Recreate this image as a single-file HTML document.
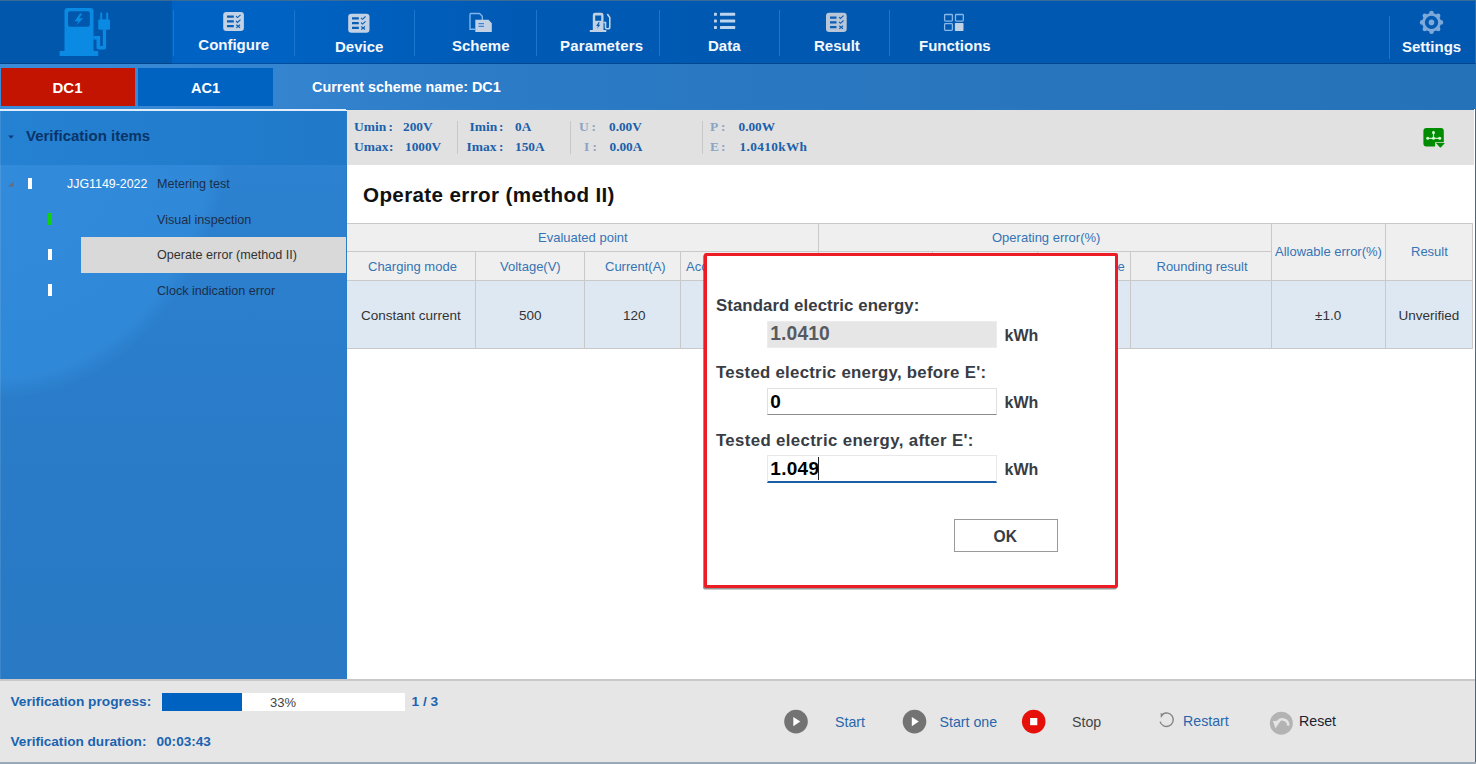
<!DOCTYPE html>
<html><head><meta charset="utf-8"><style>
html,body{margin:0;padding:0;width:1476px;height:764px;overflow:hidden;background:#ffffff;position:relative;font-family:"Liberation Sans",sans-serif;}
</style></head><body>
<div style="position:absolute;left:0px;top:0px;width:1476px;height:64px;background:linear-gradient(90deg,#0060c0 0px,#0063c4 250px,#005ab4 520px,#0058b0 800px,#0058b0 1476px);"></div>
<div style="position:absolute;left:0px;top:0px;width:172px;height:64px;background:#0057ac;"></div>
<div style="position:absolute;left:0px;top:0px;width:1476px;height:1px;background:#3a6a96;"></div>
<div style="position:absolute;left:1475px;top:0px;width:1px;height:764px;background:#50657a;"></div>
<div style="position:absolute;left:173px;top:10px;width:1px;height:46px;background:#1a76cf;"></div>
<div style="position:absolute;left:294px;top:10px;width:1px;height:46px;background:#1a76cf;"></div>
<div style="position:absolute;left:414px;top:10px;width:1px;height:46px;background:#1a76cf;"></div>
<div style="position:absolute;left:536px;top:10px;width:1px;height:46px;background:#1a76cf;"></div>
<div style="position:absolute;left:659px;top:10px;width:1px;height:46px;background:#1a76cf;"></div>
<div style="position:absolute;left:779px;top:10px;width:1px;height:46px;background:#1a76cf;"></div>
<div style="position:absolute;left:889px;top:10px;width:1px;height:46px;background:#1a76cf;"></div>
<div style="position:absolute;left:1389px;top:16px;width:1px;height:43px;background:#1a76cf;"></div>
<div style="position:absolute;left:198.3px;top:37.40px;font-family:'Liberation Sans',sans-serif;font-size:15px;line-height:15px;font-weight:bold;color:#f4f8fd;white-space:nowrap;letter-spacing:0px;">Configure</div>
<div style="position:absolute;left:335px;top:39.30px;font-family:'Liberation Sans',sans-serif;font-size:15px;line-height:15px;font-weight:bold;color:#f4f8fd;white-space:nowrap;letter-spacing:0px;">Device</div>
<div style="position:absolute;left:452px;top:38.10px;font-family:'Liberation Sans',sans-serif;font-size:15px;line-height:15px;font-weight:bold;color:#f4f8fd;white-space:nowrap;letter-spacing:0px;">Scheme</div>
<div style="position:absolute;left:560px;top:38.10px;font-family:'Liberation Sans',sans-serif;font-size:15px;line-height:15px;font-weight:bold;color:#f4f8fd;white-space:nowrap;letter-spacing:0.15px;">Parameters</div>
<div style="position:absolute;left:708px;top:37.70px;font-family:'Liberation Sans',sans-serif;font-size:15px;line-height:15px;font-weight:bold;color:#f4f8fd;white-space:nowrap;letter-spacing:0px;">Data</div>
<div style="position:absolute;left:814px;top:38.30px;font-family:'Liberation Sans',sans-serif;font-size:15px;line-height:15px;font-weight:bold;color:#f4f8fd;white-space:nowrap;letter-spacing:0px;">Result</div>
<div style="position:absolute;left:919px;top:38.30px;font-family:'Liberation Sans',sans-serif;font-size:15px;line-height:15px;font-weight:bold;color:#f4f8fd;white-space:nowrap;letter-spacing:0px;">Functions</div>
<div style="position:absolute;left:1402px;top:38.60px;font-family:'Liberation Sans',sans-serif;font-size:15px;line-height:15px;font-weight:bold;color:#f4f8fd;white-space:nowrap;letter-spacing:0px;">Settings</div>
<div style="position:absolute;left:0px;top:64px;width:1476px;height:45px;background:linear-gradient(90deg,#3a8cda 0px,#3484d0 280px,#2c7cc8 450px,#2a78c2 700px,#2672b8 1476px);"></div>
<div style="position:absolute;left:0px;top:63px;width:1476px;height:1px;background:rgba(0,40,90,0.35);"></div>
<div style="position:absolute;left:1px;top:68px;width:134px;height:38px;background:#c21400;"></div>
<div style="position:absolute;left:138px;top:68px;width:135px;height:38px;background:#0062c1;"></div>
<div style="position:absolute;left:0px;top:109px;width:346px;height:2px;background:#dfeefa;"></div>
<div style="position:absolute;left:52.5px;top:80.30px;font-family:'Liberation Sans',sans-serif;font-size:15px;line-height:15px;font-weight:bold;color:#ffffff;white-space:nowrap;letter-spacing:0px;">DC1</div>
<div style="position:absolute;left:191px;top:80.73px;font-family:'Liberation Sans',sans-serif;font-size:14.5px;line-height:14.5px;font-weight:bold;color:#ffffff;white-space:nowrap;letter-spacing:0px;">AC1</div>
<div style="position:absolute;left:312px;top:80.11px;font-family:'Liberation Sans',sans-serif;font-size:14.4px;line-height:14.4px;font-weight:bold;color:#ffffff;white-space:nowrap;letter-spacing:0px;">Current scheme name: DC1</div>
<div style="position:absolute;left:0px;top:111px;width:346px;height:568px;background:radial-gradient(ellipse 232px 288px at 0px 0px,#338bdb 0%,#3089d8 92%,rgba(48,137,216,0) 100%),linear-gradient(180deg,#2d83d2 0%,#2a7dca 45%,#2979c4 100%);"></div>
<div style="position:absolute;left:0px;top:111px;width:346px;height:54px;background:linear-gradient(90deg,#2581d2,#2079c9);"></div>
<div style="position:absolute;left:0px;top:111px;width:1px;height:568px;background:rgba(255,255,255,0.10);"></div>
<svg style="position:absolute;left:0;top:125px" width="30" height="70" viewBox="0 125 30 70"><path d="M8.3 135.5 H13.8 L11.05 138.8 Z" fill="#0b3a78"/><path d="M13.3 181.9 V186.5 H7.8 Z" fill="#6a6a78"/></svg>
<div style="position:absolute;left:26px;top:128.30px;font-family:'Liberation Sans',sans-serif;font-size:15px;line-height:15px;font-weight:bold;color:#0a3468;white-space:nowrap;letter-spacing:0px;">Verification items</div>
<div style="position:absolute;left:67px;top:177.50px;font-family:'Liberation Sans',sans-serif;font-size:12.4px;line-height:12.4px;font-weight:normal;color:#ffffff;white-space:nowrap;letter-spacing:0px;">JJG1149-2022</div>
<div style="position:absolute;left:157px;top:178.13px;font-family:'Liberation Sans',sans-serif;font-size:12.6px;line-height:12.6px;font-weight:normal;color:#1c2e4a;white-space:nowrap;letter-spacing:0px;">Metering test</div>
<div style="position:absolute;left:157px;top:214.33px;font-family:'Liberation Sans',sans-serif;font-size:12.6px;line-height:12.6px;font-weight:normal;color:#1c2e4a;white-space:nowrap;letter-spacing:0px;">Visual inspection</div>
<div style="position:absolute;left:81px;top:237px;width:265px;height:36px;background:#d9d9d9;"></div>
<div style="position:absolute;left:157px;top:249.33px;font-family:'Liberation Sans',sans-serif;font-size:12.6px;line-height:12.6px;font-weight:normal;color:#333333;white-space:nowrap;letter-spacing:0px;">Operate error (method II)</div>
<div style="position:absolute;left:157px;top:285.33px;font-family:'Liberation Sans',sans-serif;font-size:12.6px;line-height:12.6px;font-weight:normal;color:#1c2e4a;white-space:nowrap;letter-spacing:0px;">Clock indication error</div>
<div style="position:absolute;left:28px;top:178px;width:4px;height:11px;background:#ffffff;"></div>
<div style="position:absolute;left:47.5px;top:213px;width:4px;height:11.5px;background:#10d010;"></div>
<div style="position:absolute;left:47.5px;top:248.5px;width:4px;height:11.5px;background:#ffffff;"></div>
<div style="position:absolute;left:47.5px;top:284px;width:4px;height:11.5px;background:#ffffff;"></div>
<div style="position:absolute;left:346px;top:109px;width:1128px;height:1px;background:linear-gradient(90deg,#2f80cc 0px,#2b7ac4 354px,#2672b8 1130px);"></div>
<div style="position:absolute;left:347px;top:110px;width:1127px;height:55px;background:#e1e1e1;"></div>
<div style="position:absolute;left:346px;top:111px;width:1px;height:568px;background:#2a7cc9;"></div>
<div style="position:absolute;left:354px;top:119.69px;font-family:'Liberation Serif',sans-serif;font-size:13.5px;line-height:13.5px;font-weight:bold;color:#1b60aa;white-space:nowrap;letter-spacing:0px;">Umin</div>
<div style="position:absolute;left:388.5px;top:119.86px;font-family:'Liberation Serif',sans-serif;font-size:13.3px;line-height:13.3px;font-weight:bold;color:#1b60aa;white-space:nowrap;letter-spacing:0px;">:</div>
<div style="position:absolute;left:403px;top:119.86px;font-family:'Liberation Serif',sans-serif;font-size:13.3px;line-height:13.3px;font-weight:bold;color:#1b60aa;white-space:nowrap;letter-spacing:0px;">200V</div>
<div style="position:absolute;left:354px;top:139.69px;font-family:'Liberation Serif',sans-serif;font-size:13.5px;line-height:13.5px;font-weight:bold;color:#1b60aa;white-space:nowrap;letter-spacing:0px;">Umax</div>
<div style="position:absolute;left:389px;top:139.86px;font-family:'Liberation Serif',sans-serif;font-size:13.3px;line-height:13.3px;font-weight:bold;color:#1b60aa;white-space:nowrap;letter-spacing:0px;">:</div>
<div style="position:absolute;left:405px;top:139.86px;font-family:'Liberation Serif',sans-serif;font-size:13.3px;line-height:13.3px;font-weight:bold;color:#1b60aa;white-space:nowrap;letter-spacing:0px;">1000V</div>
<div style="position:absolute;left:457px;top:121px;width:1px;height:33px;background:#c8c8c8;"></div>
<div style="position:absolute;left:469.5px;top:119.69px;font-family:'Liberation Serif',sans-serif;font-size:13.5px;line-height:13.5px;font-weight:bold;color:#1b60aa;white-space:nowrap;letter-spacing:0px;">Imin</div>
<div style="position:absolute;left:499px;top:119.86px;font-family:'Liberation Serif',sans-serif;font-size:13.3px;line-height:13.3px;font-weight:bold;color:#1b60aa;white-space:nowrap;letter-spacing:0px;">:</div>
<div style="position:absolute;left:515px;top:119.86px;font-family:'Liberation Serif',sans-serif;font-size:13.3px;line-height:13.3px;font-weight:bold;color:#1b60aa;white-space:nowrap;letter-spacing:0px;">0A</div>
<div style="position:absolute;left:466.5px;top:139.69px;font-family:'Liberation Serif',sans-serif;font-size:13.5px;line-height:13.5px;font-weight:bold;color:#1b60aa;white-space:nowrap;letter-spacing:0px;">Imax</div>
<div style="position:absolute;left:499px;top:139.86px;font-family:'Liberation Serif',sans-serif;font-size:13.3px;line-height:13.3px;font-weight:bold;color:#1b60aa;white-space:nowrap;letter-spacing:0px;">:</div>
<div style="position:absolute;left:515px;top:139.86px;font-family:'Liberation Serif',sans-serif;font-size:13.3px;line-height:13.3px;font-weight:bold;color:#1b60aa;white-space:nowrap;letter-spacing:0px;">150A</div>
<div style="position:absolute;left:570px;top:121px;width:1px;height:33px;background:#c8c8c8;"></div>
<div style="position:absolute;left:579px;top:119.69px;font-family:'Liberation Serif',sans-serif;font-size:13.5px;line-height:13.5px;font-weight:bold;color:#8ca4c4;white-space:nowrap;letter-spacing:0px;">U</div>
<div style="position:absolute;left:591.5px;top:119.86px;font-family:'Liberation Serif',sans-serif;font-size:13.3px;line-height:13.3px;font-weight:bold;color:#8ca4c4;white-space:nowrap;letter-spacing:0px;">:</div>
<div style="position:absolute;left:609px;top:119.86px;font-family:'Liberation Serif',sans-serif;font-size:13.3px;line-height:13.3px;font-weight:bold;color:#1b60aa;white-space:nowrap;letter-spacing:0px;">0.00V</div>
<div style="position:absolute;left:584px;top:139.69px;font-family:'Liberation Serif',sans-serif;font-size:13.5px;line-height:13.5px;font-weight:bold;color:#8ca4c4;white-space:nowrap;letter-spacing:0px;">I</div>
<div style="position:absolute;left:592.5px;top:139.86px;font-family:'Liberation Serif',sans-serif;font-size:13.3px;line-height:13.3px;font-weight:bold;color:#8ca4c4;white-space:nowrap;letter-spacing:0px;">:</div>
<div style="position:absolute;left:609.5px;top:139.86px;font-family:'Liberation Serif',sans-serif;font-size:13.3px;line-height:13.3px;font-weight:bold;color:#1b60aa;white-space:nowrap;letter-spacing:0px;">0.00A</div>
<div style="position:absolute;left:702px;top:121px;width:1px;height:33px;background:#c8c8c8;"></div>
<div style="position:absolute;left:710px;top:119.69px;font-family:'Liberation Serif',sans-serif;font-size:13.5px;line-height:13.5px;font-weight:bold;color:#8ca4c4;white-space:nowrap;letter-spacing:0px;">P</div>
<div style="position:absolute;left:721px;top:119.86px;font-family:'Liberation Serif',sans-serif;font-size:13.3px;line-height:13.3px;font-weight:bold;color:#8ca4c4;white-space:nowrap;letter-spacing:0px;">:</div>
<div style="position:absolute;left:738.5px;top:119.86px;font-family:'Liberation Serif',sans-serif;font-size:13.3px;line-height:13.3px;font-weight:bold;color:#1b60aa;white-space:nowrap;letter-spacing:0px;">0.00W</div>
<div style="position:absolute;left:710px;top:139.69px;font-family:'Liberation Serif',sans-serif;font-size:13.5px;line-height:13.5px;font-weight:bold;color:#8ca4c4;white-space:nowrap;letter-spacing:0px;">E</div>
<div style="position:absolute;left:721px;top:139.86px;font-family:'Liberation Serif',sans-serif;font-size:13.3px;line-height:13.3px;font-weight:bold;color:#8ca4c4;white-space:nowrap;letter-spacing:0px;">:</div>
<div style="position:absolute;left:739.5px;top:139.86px;font-family:'Liberation Serif',sans-serif;font-size:13.3px;line-height:13.3px;font-weight:bold;color:#1b60aa;white-space:nowrap;letter-spacing:0.35px;">1.0410kWh</div>
<div style="position:absolute;left:347px;top:165px;width:1127px;height:514px;background:#ffffff;"></div>
<div style="position:absolute;left:363px;top:184.96px;font-family:'Liberation Sans',sans-serif;font-size:20.6px;line-height:20.6px;font-weight:bold;color:#111111;white-space:nowrap;letter-spacing:0.37px;">Operate error (method II)</div>
<div style="position:absolute;left:347px;top:223px;width:1126px;height:58px;background:#efefef;"></div>
<div style="position:absolute;left:347px;top:281px;width:1126px;height:68px;background:#dde8f3;"></div>
<div style="position:absolute;left:347px;top:223px;width:1126px;height:1px;background:#c9c9c9;"></div>
<div style="position:absolute;left:347px;top:251px;width:925px;height:1px;background:#c9c9c9;"></div>
<div style="position:absolute;left:347px;top:280px;width:1126px;height:1px;background:#c9c9c9;"></div>
<div style="position:absolute;left:347px;top:348px;width:1126px;height:1px;background:#c9c9c9;"></div>
<div style="position:absolute;left:475px;top:252px;width:1px;height:97px;background:#c9c9c9;"></div>
<div style="position:absolute;left:584px;top:252px;width:1px;height:97px;background:#c9c9c9;"></div>
<div style="position:absolute;left:680px;top:252px;width:1px;height:97px;background:#c9c9c9;"></div>
<div style="position:absolute;left:818px;top:223px;width:1px;height:126px;background:#c9c9c9;"></div>
<div style="position:absolute;left:932px;top:252px;width:1px;height:97px;background:#c9c9c9;"></div>
<div style="position:absolute;left:1037px;top:252px;width:1px;height:97px;background:#c9c9c9;"></div>
<div style="position:absolute;left:1130px;top:252px;width:1px;height:97px;background:#c9c9c9;"></div>
<div style="position:absolute;left:1271px;top:223px;width:1px;height:126px;background:#c9c9c9;"></div>
<div style="position:absolute;left:1385px;top:223px;width:1px;height:126px;background:#c9c9c9;"></div>
<div style="position:absolute;left:1472px;top:223px;width:1px;height:126px;background:#c9c9c9;"></div>
<div style="position:absolute;left:538px;top:230.50px;font-family:'Liberation Sans',sans-serif;font-size:13px;line-height:13px;font-weight:normal;color:#3574b5;white-space:nowrap;letter-spacing:0px;">Evaluated point</div>
<div style="position:absolute;left:368px;top:259.50px;font-family:'Liberation Sans',sans-serif;font-size:13px;line-height:13px;font-weight:normal;color:#3574b5;white-space:nowrap;letter-spacing:0px;">Charging mode</div>
<div style="position:absolute;left:500px;top:259.50px;font-family:'Liberation Sans',sans-serif;font-size:13px;line-height:13px;font-weight:normal;color:#3574b5;white-space:nowrap;letter-spacing:0px;">Voltage(V)</div>
<div style="position:absolute;left:605px;top:259.50px;font-family:'Liberation Sans',sans-serif;font-size:13px;line-height:13px;font-weight:normal;color:#3574b5;white-space:nowrap;letter-spacing:0px;">Current(A)</div>
<div style="position:absolute;left:686px;top:259.50px;font-family:'Liberation Sans',sans-serif;font-size:13px;line-height:13px;font-weight:normal;color:#3574b5;white-space:nowrap;letter-spacing:0px;">Acc</div>
<div style="position:absolute;left:992px;top:230.50px;font-family:'Liberation Sans',sans-serif;font-size:13px;line-height:13px;font-weight:normal;color:#3574b5;white-space:nowrap;letter-spacing:0px;">Operating error(%)</div>
<div style="position:absolute;left:1156.5px;top:259.50px;font-family:'Liberation Sans',sans-serif;font-size:13px;line-height:13px;font-weight:normal;color:#3574b5;white-space:nowrap;letter-spacing:0px;">Rounding result</div>
<div style="position:absolute;left:1275px;top:245.00px;font-family:'Liberation Sans',sans-serif;font-size:13px;line-height:13px;font-weight:normal;color:#3574b5;white-space:nowrap;letter-spacing:0px;">Allowable error(%)</div>
<div style="position:absolute;left:1411px;top:245.00px;font-family:'Liberation Sans',sans-serif;font-size:13px;line-height:13px;font-weight:normal;color:#3574b5;white-space:nowrap;letter-spacing:0px;">Result</div>
<div style="position:absolute;left:1117.6px;top:259.50px;font-family:'Liberation Sans',sans-serif;font-size:13px;line-height:13px;font-weight:normal;color:#3574b5;white-space:nowrap;letter-spacing:0px;">e</div>
<div style="position:absolute;left:361px;top:308.57px;font-family:'Liberation Sans',sans-serif;font-size:13.5px;line-height:13.5px;font-weight:normal;color:#333333;white-space:nowrap;letter-spacing:0px;">Constant current</div>
<div style="position:absolute;left:519px;top:308.57px;font-family:'Liberation Sans',sans-serif;font-size:13.5px;line-height:13.5px;font-weight:normal;color:#333333;white-space:nowrap;letter-spacing:0px;">500</div>
<div style="position:absolute;left:623px;top:308.57px;font-family:'Liberation Sans',sans-serif;font-size:13.5px;line-height:13.5px;font-weight:normal;color:#333333;white-space:nowrap;letter-spacing:0px;">120</div>
<div style="position:absolute;left:1315px;top:308.57px;font-family:'Liberation Sans',sans-serif;font-size:13.5px;line-height:13.5px;font-weight:normal;color:#333333;white-space:nowrap;letter-spacing:0px;">±1.0</div>
<div style="position:absolute;left:1398.5px;top:308.57px;font-family:'Liberation Sans',sans-serif;font-size:13.5px;line-height:13.5px;font-weight:normal;color:#333333;white-space:nowrap;letter-spacing:0px;">Unverified</div>
<svg style="position:absolute;left:1420px;top:124px" width="30" height="28" viewBox="0 0 30 28">
<path d="M6.4 3.9 H20.8 Q23.8 3.9 23.8 6.9 V18.2 H15.1 V22.4 H6.4 Q3.4 22.4 3.4 19.4 V6.9 Q3.4 3.9 6.4 3.9 Z" fill="#008c00"/>
<path d="M15.9 19.1 H24.9 L21 23.3 Q20.4 23.9 19.8 23.3 Z" fill="#008c00"/>
<path d="M7.7 14.3 H19.7 M13.5 14.3 V8.5" stroke="#b8f0b8" stroke-width="1.2"/>
<circle cx="7.7" cy="14.3" r="1.5" fill="#d8f8d8"/><circle cx="13.5" cy="14.3" r="1.5" fill="#d8f8d8"/>
<circle cx="19.7" cy="14.3" r="1.5" fill="#d8f8d8"/><circle cx="13.5" cy="8.5" r="1.5" fill="#d8f8d8"/>
</svg>
<div style="position:absolute;left:704px;top:253px;width:414px;height:334.5px;background:#ffffff;box-sizing:border-box;border:3.9px solid #ec1b24;border-radius:2px;box-shadow:-1px 1.6px 0.6px rgba(60,60,60,0.55);"></div>
<div style="position:absolute;left:716px;top:297.68px;font-family:'Liberation Sans',sans-serif;font-size:16.8px;line-height:16.8px;font-weight:bold;color:#383c44;white-space:nowrap;letter-spacing:0.08px;">Standard electric energy:</div>
<div style="position:absolute;left:766.5px;top:320.5px;width:230px;height:27px;background:#e6e6e6;box-sizing:border-box;border:1px solid #ececec;"></div>
<div style="position:absolute;left:770.3px;top:323.96px;font-family:'Liberation Sans',sans-serif;font-size:19.3px;line-height:19.3px;font-weight:bold;color:#575b61;white-space:nowrap;letter-spacing:0.1px;">1.0410</div>
<div style="position:absolute;left:1004.5px;top:327.66px;font-family:'Liberation Sans',sans-serif;font-size:16px;line-height:16px;font-weight:bold;color:#383c44;white-space:nowrap;letter-spacing:0px;">kWh</div>
<div style="position:absolute;left:716px;top:365.28px;font-family:'Liberation Sans',sans-serif;font-size:16.8px;line-height:16.8px;font-weight:bold;color:#383c44;white-space:nowrap;letter-spacing:0.28px;">Tested electric energy, before E':</div>
<div style="position:absolute;left:766.5px;top:387.5px;width:230px;height:27px;background:#ffffff;box-sizing:border-box;border:1px solid #e0e0e0;border-bottom:1px solid #8a8a8a;"></div>
<div style="position:absolute;left:770.3px;top:391.92px;font-family:'Liberation Sans',sans-serif;font-size:19px;line-height:19px;font-weight:bold;color:#000000;white-space:nowrap;letter-spacing:0px;">0</div>
<div style="position:absolute;left:1004.5px;top:394.76px;font-family:'Liberation Sans',sans-serif;font-size:16px;line-height:16px;font-weight:bold;color:#383c44;white-space:nowrap;letter-spacing:0px;">kWh</div>
<div style="position:absolute;left:716px;top:432.58px;font-family:'Liberation Sans',sans-serif;font-size:16.8px;line-height:16.8px;font-weight:bold;color:#383c44;white-space:nowrap;letter-spacing:0.36px;">Tested electric energy, after E':</div>
<div style="position:absolute;left:766.5px;top:455px;width:230px;height:28px;background:#ffffff;box-sizing:border-box;border:1px solid #e8e8e8;border-bottom:2px solid #1b5ea6;"></div>
<div style="position:absolute;left:770.3px;top:458.92px;font-family:'Liberation Sans',sans-serif;font-size:19px;line-height:19px;font-weight:bold;color:#000000;white-space:nowrap;letter-spacing:0.3px;">1.049</div>
<div style="position:absolute;left:817.6px;top:456.5px;width:1.3px;height:23px;background:#222222;"></div>
<div style="position:absolute;left:1004.5px;top:462.46px;font-family:'Liberation Sans',sans-serif;font-size:16px;line-height:16px;font-weight:bold;color:#383c44;white-space:nowrap;letter-spacing:0px;">kWh</div>
<div style="position:absolute;left:954px;top:519px;width:104px;height:33px;background:#ffffff;box-sizing:border-box;border:1px solid #9a9a9a;"></div>
<div style="position:absolute;left:993.5px;top:528.69px;font-family:'Liberation Sans',sans-serif;font-size:15.6px;line-height:15.6px;font-weight:bold;color:#383c44;white-space:nowrap;letter-spacing:0px;">OK</div>
<div style="position:absolute;left:0px;top:679px;width:1475px;height:2px;background:#c8c8c8;"></div>
<div style="position:absolute;left:0px;top:681px;width:1475px;height:81px;background:#e6e6e6;"></div>
<div style="position:absolute;left:0px;top:762px;width:1476px;height:2px;background:#9aa8b8;"></div>
<div style="position:absolute;left:10.5px;top:695.30px;font-family:'Liberation Sans',sans-serif;font-size:13.7px;line-height:13.7px;font-weight:bold;color:#1a63b0;white-space:nowrap;letter-spacing:0px;">Verification progress:</div>
<div style="position:absolute;left:162px;top:692.5px;width:243px;height:18px;background:#ffffff;"></div>
<div style="position:absolute;left:162px;top:692.5px;width:79.5px;height:18px;background:#0062c0;"></div>
<div style="position:absolute;left:270px;top:695.90px;font-family:'Liberation Sans',sans-serif;font-size:13px;line-height:13px;font-weight:normal;color:#444444;white-space:nowrap;letter-spacing:0px;">33%</div>
<div style="position:absolute;left:411.5px;top:695.30px;font-family:'Liberation Sans',sans-serif;font-size:13.7px;line-height:13.7px;font-weight:bold;color:#1a63b0;white-space:nowrap;letter-spacing:0px;">1 / 3</div>
<div style="position:absolute;left:10.5px;top:735.19px;font-family:'Liberation Sans',sans-serif;font-size:13.6px;line-height:13.6px;font-weight:bold;color:#1a63b0;white-space:nowrap;letter-spacing:0px;">Verification duration:</div>
<div style="position:absolute;left:156.5px;top:735.19px;font-family:'Liberation Sans',sans-serif;font-size:13.6px;line-height:13.6px;font-weight:bold;color:#1a63b0;white-space:nowrap;letter-spacing:0px;">00:03:43</div>
<svg style="position:absolute;left:780px;top:705px" width="580" height="34" viewBox="780 705 580 34">
<circle cx="796" cy="721.6" r="11.8" fill="#737373"/>
<path d="M793.3 717 L800.3 721.6 L793.3 726.2 Z" fill="#ffffff"/>
<circle cx="914.5" cy="721.6" r="11.8" fill="#737373"/>
<path d="M911.8 717 L918.8 721.6 L911.8 726.2 Z" fill="#ffffff"/>
<circle cx="1033.7" cy="721.6" r="11.8" fill="#e5100a"/>
<rect x="1030.1" y="718" width="7.2" height="7.2" fill="#ffffff"/>
<path d="M1162.6 714.3 A6.7 6.7 0 1 1 1160.1 721.6" fill="none" stroke="#858585" stroke-width="1.4"/>
<path d="M1160.6 712.9 L1163.8 714.6 L1160.8 717.9 Z" fill="#858585"/>
<circle cx="1281.3" cy="723.2" r="11.5" fill="#b3b3b3"/>
<path d="M1277.6 722.2 A5.7 5.7 0 0 1 1288.2 725.6" fill="none" stroke="#e4e4e4" stroke-width="2.6"/>
<path d="M1272.9 721.1 L1275.5 728.3 L1280.7 720.7 Z" fill="#e4e4e4"/>
</svg>
<div style="position:absolute;left:835px;top:715.28px;font-family:'Liberation Sans',sans-serif;font-size:14.2px;line-height:14.2px;font-weight:normal;color:#2866ad;white-space:nowrap;letter-spacing:0px;">Start</div>
<div style="position:absolute;left:939.5px;top:715.28px;font-family:'Liberation Sans',sans-serif;font-size:14.2px;line-height:14.2px;font-weight:normal;color:#2866ad;white-space:nowrap;letter-spacing:0px;">Start one</div>
<div style="position:absolute;left:1072px;top:715.28px;font-family:'Liberation Sans',sans-serif;font-size:14.2px;line-height:14.2px;font-weight:normal;color:#444444;white-space:nowrap;letter-spacing:0px;">Stop</div>
<div style="position:absolute;left:1183px;top:714.38px;font-family:'Liberation Sans',sans-serif;font-size:14.2px;line-height:14.2px;font-weight:normal;color:#2866ad;white-space:nowrap;letter-spacing:0px;">Restart</div>
<div style="position:absolute;left:1299px;top:714.38px;font-family:'Liberation Sans',sans-serif;font-size:14.2px;line-height:14.2px;font-weight:normal;color:#1a2233;white-space:nowrap;letter-spacing:0px;">Reset</div>
<svg style="position:absolute;left:0;top:0" width="1476" height="64" viewBox="0 0 1476 64">
<!-- logo -->
<g fill="#0a8ae2">
<path d="M64.5 51 V11 Q64.5 8 67.5 8 H90.5 Q93.5 8 93.5 11 V51 Z M68 13.3 V24.8 Q68 26.8 70 26.8 H87.8 Q89.8 26.8 89.8 24.8 V13.3 Q89.8 11.3 87.8 11.3 H70 Q68 11.3 68 13.3 Z" fill-rule="evenodd"/>
<rect x="59.6" y="51" width="38.6" height="5" />
<path d="M80 13.4 L74.6 21.3 H78.4 L76.2 25.6 L83.2 18.2 H79.4 L82.3 13.4 Z"/>
<path d="M93.5 36 H100.2 V46 H102.8 V29.3 H106.1 V47.4 Q106.1 49.4 104.1 49.4 H98.5 Q96.5 49.4 96.5 47.4 V39.4 H93.5 Z"/>
<rect x="98.2" y="19.3" width="11.8" height="10.4" rx="1.5"/>
<rect x="100.2" y="12.6" width="2" height="7"/>
<rect x="106.2" y="12.6" width="2" height="7"/>
</g>
<!-- configure -->
<rect x="223.2" y="12.1" width="20.7" height="18.8" rx="3.2" fill="#c2d1e4"/>
<g stroke="#0a5eb4" stroke-width="2.2"><path d="M227 16.7 H233.8 M227 21.4 H233.8 M227 26.2 H233.8"/></g>
<g stroke="#0a5eb4" stroke-width="1.1" fill="none"><path d="M236 16.2 L237.5 17.6 L240.5 14.8 M236 21 L237.5 22.4 L240.5 19.6 M236.3 24.8 L240 27.8 M240 24.8 L236.3 27.8"/></g>
<!-- device -->
<rect x="348.2" y="13.8" width="21.3" height="19" rx="3.2" fill="#c2d1e4"/>
<g stroke="#0a5eb4" stroke-width="2.2"><path d="M352 18.4 H358.8 M352 23.1 H358.8 M352 27.9 H358.8"/></g>
<g stroke="#0a5eb4" stroke-width="1.1" fill="none"><path d="M361 17.9 L362.5 19.3 L365.5 16.5 M361 22.7 L362.5 24.1 L365.5 21.3 M361.3 26.5 L365 29.5 M365 26.5 L361.3 29.5"/></g>
<!-- scheme -->
<path d="M470 13.5 H479.5 L482.3 16.3 V20 M475 29.2 H470 V13.5" fill="none" stroke="#7fb4ec" stroke-width="1.4"/>
<path d="M475.3 19.8 H488.5 L491.8 23.2 V32 H475.3 Z" fill="#c2d1e4"/>
<g stroke="#3f86d0" stroke-width="1.3"><path d="M478.5 23.6 H484 M478.5 26.3 H484"/></g>
<!-- parameters -->
<path d="M592.8 30 V15 Q592.8 12.8 595 12.8 H601.3 Q603.5 12.8 603.5 15 V30 Z M595.2 15.5 V20.7 H601.2 V15.5 Z" fill="#c2d1e4" fill-rule="evenodd"/>
<rect x="589.8" y="30" width="16.5" height="2" fill="#c2d1e4"/>
<path d="M598.5 22.2 L596.2 26 H598 L597 28.8 L600.3 24.8 H598.6 L599.8 22.2 Z" fill="#0a5eb4"/>
<path d="M603.5 22.5 H605.5 V27.5 Q605.5 28.8 606.8 28.8 H608 Q609.8 28.8 609.8 27 V17.5 L607.3 14" fill="none" stroke="#c2d1e4" stroke-width="1.6"/>
<!-- data -->
<g fill="#bcd4ee">
<rect x="714" y="12.8" width="2.9" height="3" rx="0.6"/><rect x="714" y="19.5" width="2.9" height="3" rx="0.6"/><rect x="714" y="26" width="2.9" height="3" rx="0.6"/>
<rect x="720" y="12.8" width="15.2" height="3" rx="0.6"/><rect x="720" y="19.5" width="15.2" height="3" rx="0.6"/><rect x="720" y="26" width="15.2" height="3" rx="0.6"/>
</g>
<!-- result -->
<rect x="826" y="12.8" width="20.7" height="19.2" rx="3.2" fill="#b8c6d8"/>
<g stroke="#0a5eb4" stroke-width="2.2"><path d="M830 17.6 H836.5 M830 22.3 H836.5 M830 27.1 H836.5"/></g>
<g stroke="#0a5eb4" stroke-width="1.1" fill="none"><path d="M839 17.1 L840.5 18.5 L843.5 15.7 M839 21.9 L840.5 23.3 L843.5 20.5 M839.3 25.7 L843 28.7 M843 25.7 L839.3 28.7"/></g>
<!-- functions -->
<g fill="none" stroke="#86b8ea" stroke-width="1.3">
<rect x="944.6" y="14.5" width="7.8" height="6.6" rx="0.8"/>
<rect x="955.5" y="14.5" width="7.8" height="6.6" rx="0.8"/>
<rect x="944.6" y="23.7" width="7.8" height="6.6" rx="0.8"/>
</g>
<rect x="954.9" y="23.1" width="8.6" height="7.8" rx="0.6" fill="#c2d1e4"/>
<!-- settings gear -->
<g fill="#7ea9d9">
<circle cx="1431.5" cy="22.4" r="9.4"/>
<circle cx="1440.90" cy="22.40" r="2.3"/><circle cx="1438.15" cy="29.05" r="2.3"/><circle cx="1431.50" cy="31.80" r="2.3"/><circle cx="1424.85" cy="29.05" r="2.3"/><circle cx="1422.10" cy="22.40" r="2.3"/><circle cx="1424.85" cy="15.75" r="2.3"/><circle cx="1431.50" cy="13.00" r="2.3"/><circle cx="1438.15" cy="15.75" r="2.3"/>
</g>
<circle cx="1431.5" cy="22.4" r="6.6" fill="#005ab3"/>
<circle cx="1431.5" cy="22.4" r="2.8" fill="#7ea9d9"/>
</svg>
</body></html>
